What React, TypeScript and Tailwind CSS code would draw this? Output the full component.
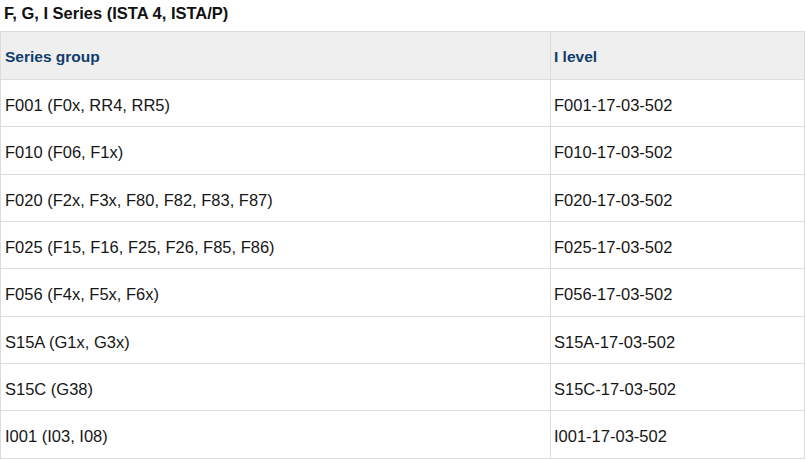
const rows: [string, string][] = [
  ['F001 (F0x, RR4, RR5)', 'F001-17-03-502'],
  ['F010 (F06, F1x)', 'F010-17-03-502'],
  ['F020 (F2x, F3x, F80, F82, F83, F87)', 'F020-17-03-502'],
  ['F025 (F15, F16, F25, F26, F85, F86)', 'F025-17-03-502'],
  ['F056 (F4x, F5x, F6x)', 'F056-17-03-502'],
  ['S15A (G1x, G3x)', 'S15A-17-03-502'],
  ['S15C (G38)', 'S15C-17-03-502'],
  ['I001 (I03, I08)', 'I001-17-03-502'],
];

export default function App() {
  return (
    <div className="w-[806px] h-[460px] overflow-hidden bg-white font-['Liberation_Sans',Arial,sans-serif]">
      <h3 className="pt-[4px] pl-[4px] text-[16.5px] leading-[18px] font-bold text-[#111]">
        F, G, I Series (ISTA 4, ISTA/P)
      </h3>
      <table className="mt-[9px] w-[805px] border-collapse table-fixed">
        <thead>
          <tr className="bg-[#efefef]">
            <th className="w-[550px] h-[48px] border border-[#dcdcdc] pl-1 pt-[15px] pb-[13px] text-left text-[15.5px] leading-[18px] font-bold text-[#0f3d6c]">
              Series group
            </th>
            <th className="border border-[#dcdcdc] pl-[3px] pt-[15px] pb-[13px] text-left text-[15.5px] leading-[18px] font-bold text-[#0f3d6c]">
              I level
            </th>
          </tr>
        </thead>
        <tbody>
          {rows.map(([group, level]) => (
            <tr key={group}>
              <td className="h-[47.33px] border border-[#dcdcdc] pl-1 pt-[16px] pb-[12px] text-[16.5px] leading-[18px] text-[#161616]">
                {group}
              </td>
              <td className="border border-[#dcdcdc] pl-[3px] pt-[16px] pb-[12px] text-[16.5px] leading-[18px] text-[#161616]">
                {level}
              </td>
            </tr>
          ))}
        </tbody>
      </table>
    </div>
  );
}
